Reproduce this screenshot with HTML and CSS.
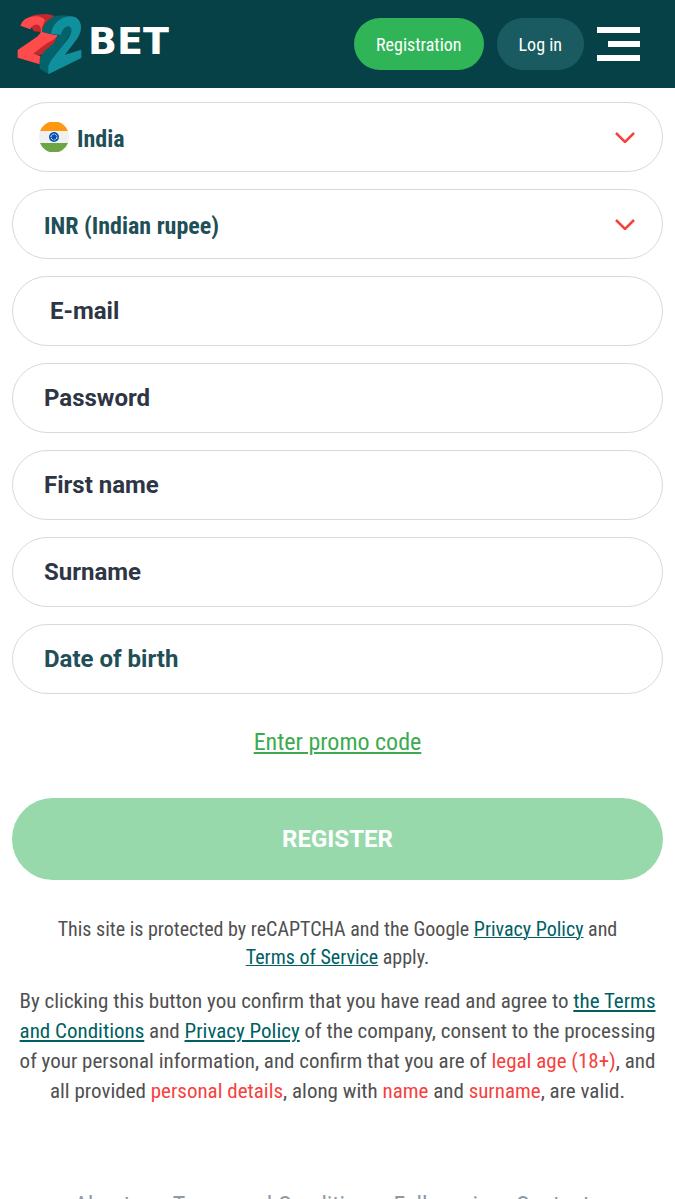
FILE: index.html
```html
<!DOCTYPE html>
<html lang="en">
<head>
    <meta charset="UTF-8">
    <meta name="viewport" content="width=device-width, initial-scale=1">
    <title>22BET Registration</title>
    <link rel="stylesheet" href="styles.css">
</head>
<body>
    <header class="header">
        <a href="#" class="logo">
            <svg class="logo-mark" viewBox="20 26 195 183" aria-hidden="true">
                <!-- red part -->
                <path fill="#c2282c" d="M40 46 62 33Q76 26 108 26 124 27 132 33L122 44 100 64 93 80 70 78 62 62ZM68 150 92 118 118 108 144 92 132 112 122 130 96 148Z"/>
                <path fill="#ff4b4b" d="M30 61Q38 36 72 33 Q96 32 104 44 L95 66 96 78 122 86 142 90 Q136 101 118 109 Q98 120 69 146 L90 152 88 177 22 157 22 134 80 94 Q94 82 92 70 Q88 56 74 58 66 59 60 72Z"/>
                <!-- teal part -->
                <path fill="#04626b" d="M95 80Q98 54 122 38 Q134 30 160 30 L182 33 184 80 150 90 122 87ZM142 90 184 80 118 180 116 207 88 190 88 160Q92 148 106 134 L132 112Z"/>
                <path fill="#108f9c" d="M122 86Q126 54 156 38 Q178 28 196 36 Q213 46 212 70 Q210 88 196 106 L164 148 213 133 213 158 114 207 114 182Q118 168 132 153 L172 102 Q184 86 183 72 Q180 60 168 64 Q156 70 151 88Z"/>
            </svg>
            <span class="logo-text">BET</span>
        </a>
        <nav class="header-nav">
            <button type="button" class="btn btn-registration">Registration</button>
            <button type="button" class="btn btn-login">Log in</button>
            <button type="button" class="menu-button" aria-label="Menu">
                <span></span>
                <span></span>
                <span></span>
            </button>
        </nav>
    </header>

    <main class="content">
        <form class="form">
            <div class="field">
                <svg class="flag" viewBox="0 0 30 30" aria-hidden="true">
                    <circle cx="15" cy="15" r="15" fill="#f0f0f0"/>
                    <path fill="#ff9811" d="M1 9A15 15 0 0 1 29 9Z"/>
                    <path fill="#6da544" d="M1 21A15 15 0 0 0 29 21Z"/>
                    <circle cx="15" cy="15" r="5" fill="#0052b4"/>
                    <circle cx="15" cy="15" r="3" fill="none" stroke="#f0f0f0" stroke-dasharray="2 1"/>
                </svg>
                <select class="control control-country" aria-label="Country">
                    <option>India</option>
                </select>
                <svg class="arrow" viewBox="0 0 20 12" aria-hidden="true"><path d="M1 2 10 11 19 2"/></svg>
            </div>
            <div class="field">
                <select class="control control-currency" aria-label="Currency">
                    <option>INR (Indian rupee)</option>
                </select>
                <svg class="arrow" viewBox="0 0 20 12" aria-hidden="true"><path d="M1 2 10 11 19 2"/></svg>
            </div>
            <div class="field">
                <input type="email" class="control control-email" placeholder="E-mail" aria-label="E-mail">
            </div>
            <div class="field">
                <input type="password" class="control" placeholder="Password" aria-label="Password">
            </div>
            <div class="field">
                <input type="text" class="control" placeholder="First name" aria-label="First name">
            </div>
            <div class="field">
                <input type="text" class="control" placeholder="Surname" aria-label="Surname">
            </div>
            <div class="field">
                <input type="text" class="control control-date" placeholder="Date of birth" aria-label="Date of birth">
            </div>

            <a href="#" class="promo">Enter promo code</a>

            <button type="submit" class="register">REGISTER</button>
        </form>

        <p class="captcha">This site is protected by reCAPTCHA and the Google <a href="#">Privacy Policy</a> and <a href="#">Terms of Service</a> apply.</p>

        <p class="agreement">By clicking this button you confirm that you have read and agree to <a href="#">the Terms and Conditions</a> and <a href="#">Privacy Policy</a> of the company, consent to the processing of your personal information, and confirm that you are of <span class="red">legal age (18+)</span>, and all provided <span class="red">personal details</span>, along with <span class="red">name</span> and <span class="red">surname</span>, are valid.</p>
    </main>

    <footer class="footer">
        <a href="#">About us</a>
        <a href="#">Terms and Conditions</a>
        <a href="#">Full version</a>
        <a href="#">Contacts</a>
    </footer>
</body>
</html>
```
FILE: styles.css
```css
:root {
    --header-bg: #054146;
    --green: #2fb457;
    --red: #f5423e;
    --teal: #005f63;
    --text: #505050;
    --condensed: "Roboto Condensed", "Liberation Sans Narrow", Roboto, sans-serif;
}

* {
    box-sizing: border-box;
}

body {
    margin: 0;
    background: #fff;
    color: var(--text);
    font-family: var(--condensed);
}

button {
    border: none;
    cursor: pointer;
}

.header {
    display: flex;
    justify-content: space-between;
    align-items: center;
    height: 88px;
    padding: 0 35px 0 17px;
    background: var(--header-bg);
}

.logo {
    display: flex;
    align-items: center;
    gap: 6px;
    text-decoration: none;
}

.logo-mark {
    width: 65px;
    height: 61px;
}

.logo-text {
    color: #fff;
    font: bold 38px/50px "DejaVu Sans", sans-serif;
    padding-bottom: 6px;
}

.header-nav {
    display: flex;
    align-items: center;
    gap: 13px;
}

.btn {
    height: 52px;
    padding: 0 22px;
    border-radius: 26px;
    color: #fff;
    font: 18px var(--condensed);
}

.btn-registration {
    background: var(--green);
}

.btn-login {
    background: #1a5b62;
}

.menu-button {
    display: flex;
    flex-direction: column;
    align-items: flex-end;
    gap: 8px;
    width: 43px;
    padding: 0;
    background: none;
}

.menu-button span {
    width: 100%;
    height: 6px;
    background: #fff;
}

.menu-button span:nth-child(2) {
    width: 32px;
}

.content {
    padding: 14px 12px 0;
}

.form {
    display: flex;
    flex-direction: column;
    gap: 17px;
}

.field {
    display: flex;
    align-items: center;
    height: 70px;
    position: relative;
    border: 1px solid #d9d9d9;
    border-radius: 35px;
}

.control {
    width: 100%;
    height: 100%;
    padding: 0 31px;
    border: none;
    border-radius: 35px;
    outline: none;
    background: none;
    appearance: none;
    color: #2e3545;
    font: bold 24px Roboto, sans-serif;
}

.control::placeholder {
    color: #2e3545;
    opacity: 1;
}

.control-date::placeholder {
    color: #1f4f57;
}

.control-email {
    padding-left: 37px;
}

select.control {
    padding-top: 3px;
    color: #1f4f57;
    font: bold 24px var(--condensed);
}

.control-country {
    padding-left: 64px;
}

/* flag and arrow lie over the select */
.flag,
.arrow {
    position: absolute;
    pointer-events: none;
}

.flag {
    left: 26px;
    width: 30px;
    height: 30px;
}

.arrow {
    right: 27px;
    width: 20px;
    height: 12px;
    fill: none;
    stroke: var(--red);
    stroke-width: 2.5;
}

.promo {
    align-self: center;
    margin: 16px 0 24px;
    color: #3cab50;
    font-size: 24px;
    line-height: 30px;
}

.register {
    height: 82px;
    border-radius: 41px;
    background: #97d9ab;
    color: #fff;
    font: bold 24px Roboto, sans-serif;
}

.captcha,
.agreement {
    margin: 0;
    text-align: center;
}

.captcha {
    padding: 35px 40px 0;
    font-size: 20px;
    line-height: 28px;
}

.agreement {
    padding-top: 15px;
    font-size: 21px;
    line-height: 30px;
}

.captcha a,
.agreement a {
    color: var(--teal);
}

.captcha a {
    text-decoration-thickness: 1px;
}

.red {
    color: var(--red);
}

.footer {
    display: flex;
    justify-content: center;
    gap: 14px;
    padding: 84px 12px 40px;
    font-size: 24px;
    line-height: 30px;
    white-space: nowrap;
}

.footer a {
    color: #8e99a4;
    text-decoration: none;
}
```
